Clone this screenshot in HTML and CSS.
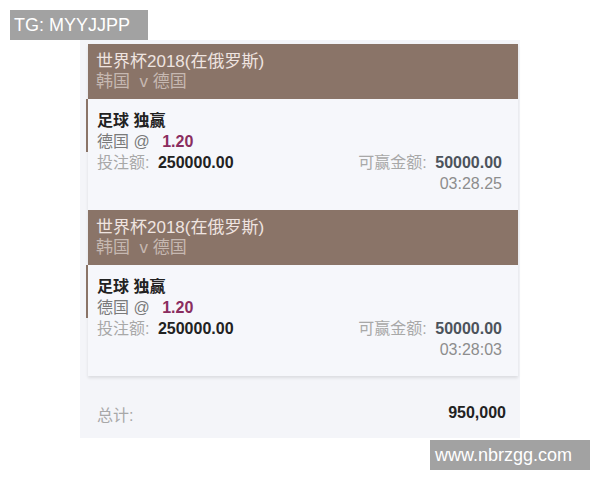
FILE: index.html
```html
<!DOCTYPE html>
<html lang="zh-CN">
  <head>
    <meta charset="UTF-8" />
    <meta name="viewport" content="width=device-width, initial-scale=1.0" />
    <title>投注单</title>
    <link rel="stylesheet" href="styles.css">
  </head>
  <body>
    <div class="tag">TG: MYYJJPP</div>
    <div class="panel">
      <div class="slips">
        <div class="slip">
          <div class="slip-head">
            <div class="league">世界杯2018(在俄罗斯)</div>
            <div class="match">韩国 &nbsp;v 德国</div>
          </div>
          <div class="slip-body">
            <div class="pick">
              <div class="market">足球 独赢</div>
              <div class="odds">德国 @ <span class="price">1.20</span></div>
            </div>
            <div class="amounts">
              <div><span class="label">投注额:</span> <b>250000.00</b></div>
              <div><span class="label">可赢金额:</span> <b class="win">50000.00</b></div>
            </div>
            <div class="time">03:28.25</div>
          </div>
        </div>
        <div class="slip">
          <div class="slip-head">
            <div class="league">世界杯2018(在俄罗斯)</div>
            <div class="match">韩国 &nbsp;v 德国</div>
          </div>
          <div class="slip-body">
            <div class="pick">
              <div class="market">足球 独赢</div>
              <div class="odds">德国 @ <span class="price">1.20</span></div>
            </div>
            <div class="amounts">
              <div><span class="label">投注额:</span> <b>250000.00</b></div>
              <div><span class="label">可赢金额:</span> <b class="win">50000.00</b></div>
            </div>
            <div class="time">03:28:03</div>
          </div>
        </div>
      </div>
      <div class="total">
        <span class="label">总计:</span>
        <b>950,000</b>
      </div>
    </div>
    <div class="site">www.nbrzgg.com</div>
  </body>
</html>
```

FILE: styles.css
```css
body {
  margin: 0;
  padding: 10px;
  background: #fff;
  font-family: "Liberation Sans", "Noto Sans CJK SC", sans-serif;
}
.tag,
.site {
  display: inline-block;
  height: 30px;
  line-height: 30px;
  background: #a2a2a2;
  color: #fff;
  font-size: 18px;
  padding-left: 4px;
  box-sizing: border-box;
}
.tag {
  width: 138px;
  vertical-align: top;
}
.site {
  display: block;
  width: 160px;
  margin: 2px 0 0 420px;
  padding-left: 5px;
}
.panel {
  width: 440px;
  margin-left: 70px;
  padding-top: 4px;
  background: #f4f5f9;
}
.slips {
  margin: 0 2px 0 8px;
  box-shadow: 0 2px 3px rgba(0, 0, 0, 0.1);
}
.slip-head {
  height: 55px;
  box-sizing: border-box;
  padding: 8px 8px 0;
  background: #8a7468;
  font-size: 17px;
  line-height: 20px;
}
.league {
  color: #efe4e0;
}
.match {
  color: #c6b8b1;
}
.slip-body {
  padding: 0 16px 16px 0;
  background: #f6f7fb;
  font-size: 16px;
  line-height: 21px;
}
.pick {
  margin-left: -2px;
  padding: 11px 0 0 9px;
  border-left: 2px solid #8a7468;
}
.market {
  font-weight: bold;
  color: #222;
}
.odds {
  color: #7a7a7a;
}
.price {
  margin-left: 8px;
  font-weight: bold;
  color: #8a2d5f;
}
.amounts {
  display: flex;
  justify-content: space-between;
  padding-left: 9px;
}
.label {
  color: #a8a8a8;
}
.amounts b {
  color: #222;
  margin-left: 4px;
}
.amounts b.win {
  color: #4c535b;
}
.time {
  text-align: right;
  color: #8d8d8d;
}
.total {
  display: flex;
  justify-content: space-between;
  align-items: center;
  height: 62px;
  padding: 14px 14px 0 17px;
  box-sizing: border-box;
  font-size: 16px;
}
.total b {
  color: #222;
  margin-top: -2px;
}
```
